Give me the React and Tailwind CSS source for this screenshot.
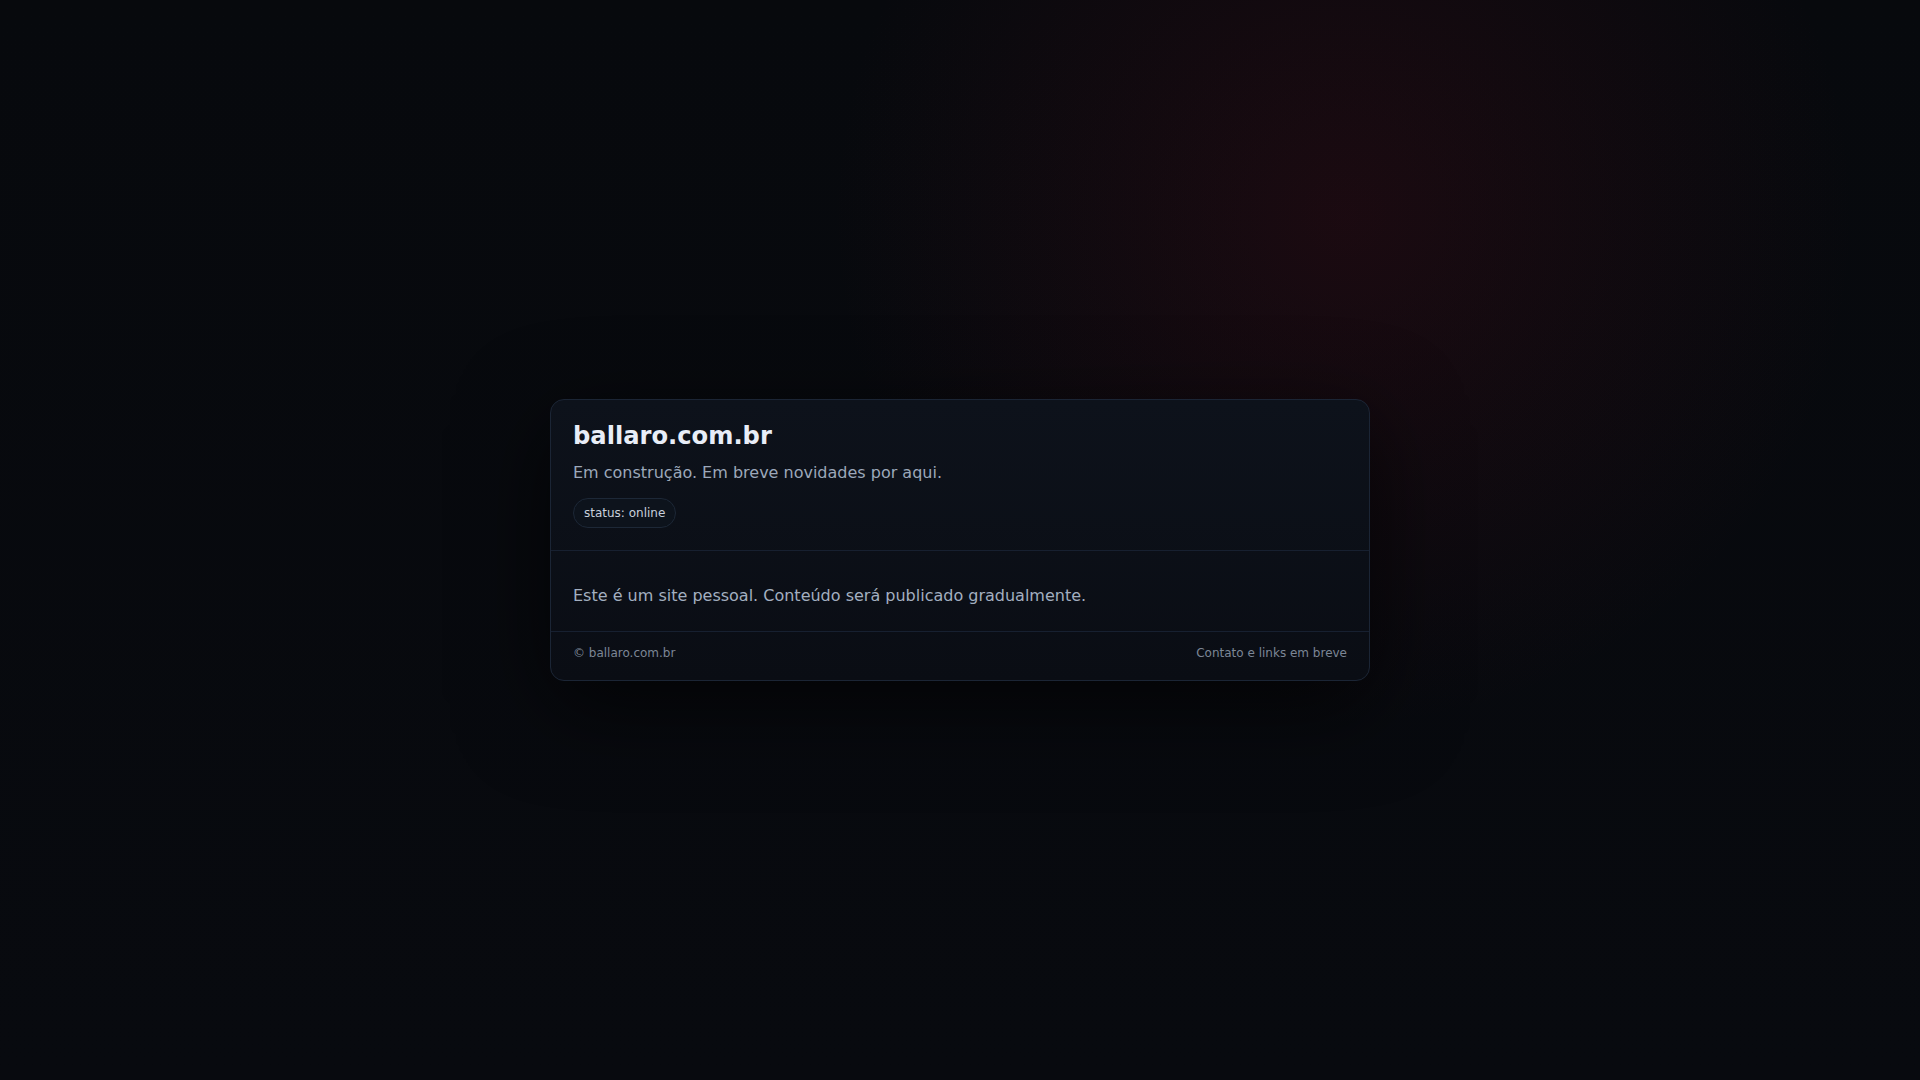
export default function App() {
  return (
    <div className="min-h-screen w-full bg-[#07090d] bg-[radial-gradient(circle_at_70%_20%,rgba(125,16,34,0.17),transparent_32%),linear-gradient(180deg,#07090d_0%,#080a0f_100%)] flex items-center justify-center font-['DejaVu_Sans',sans-serif]">
      <div className="w-[820px] rounded-[14px] border border-[#1b2535] bg-gradient-to-b from-[#0d121b] to-[#0a0d14] shadow-[0_24px_90px_rgba(0,0,0,0.65)] overflow-hidden">
        <header className="px-[22px] pt-[22px] pb-[22px] border-b border-[#172030]">
          <h1 className="text-[24.2px] leading-[1.2] font-bold text-[#e8edf7]">ballaro.com.br</h1>
          <p className="mt-[10px] text-[16px] leading-[24px] text-[#9ca8ba]">Em construção. Em breve novidades por aqui.</p>
          <span className="inline-block mt-[13px] px-[10px] py-[5px] rounded-full border border-[#1d2837] bg-[#0d131c] text-[12px] leading-[18px] text-[#c8d0dc]">
            status: online
          </span>
        </header>

        <main className="px-[22px] pt-[32px] pb-[22px] border-b border-[#172030]">
          <p className="text-[16px] leading-[1.6] text-[#a3afc0]">Este é um site pessoal. Conteúdo será publicado gradualmente.</p>
        </main>

        <footer className="px-[22px] pt-[12px] pb-[18px] flex justify-between text-[12px] leading-[18px] text-[#7c8696]">
          <span>© ballaro.com.br</span>
          <span>Contato e links em breve</span>
        </footer>
      </div>
    </div>
  );
}
